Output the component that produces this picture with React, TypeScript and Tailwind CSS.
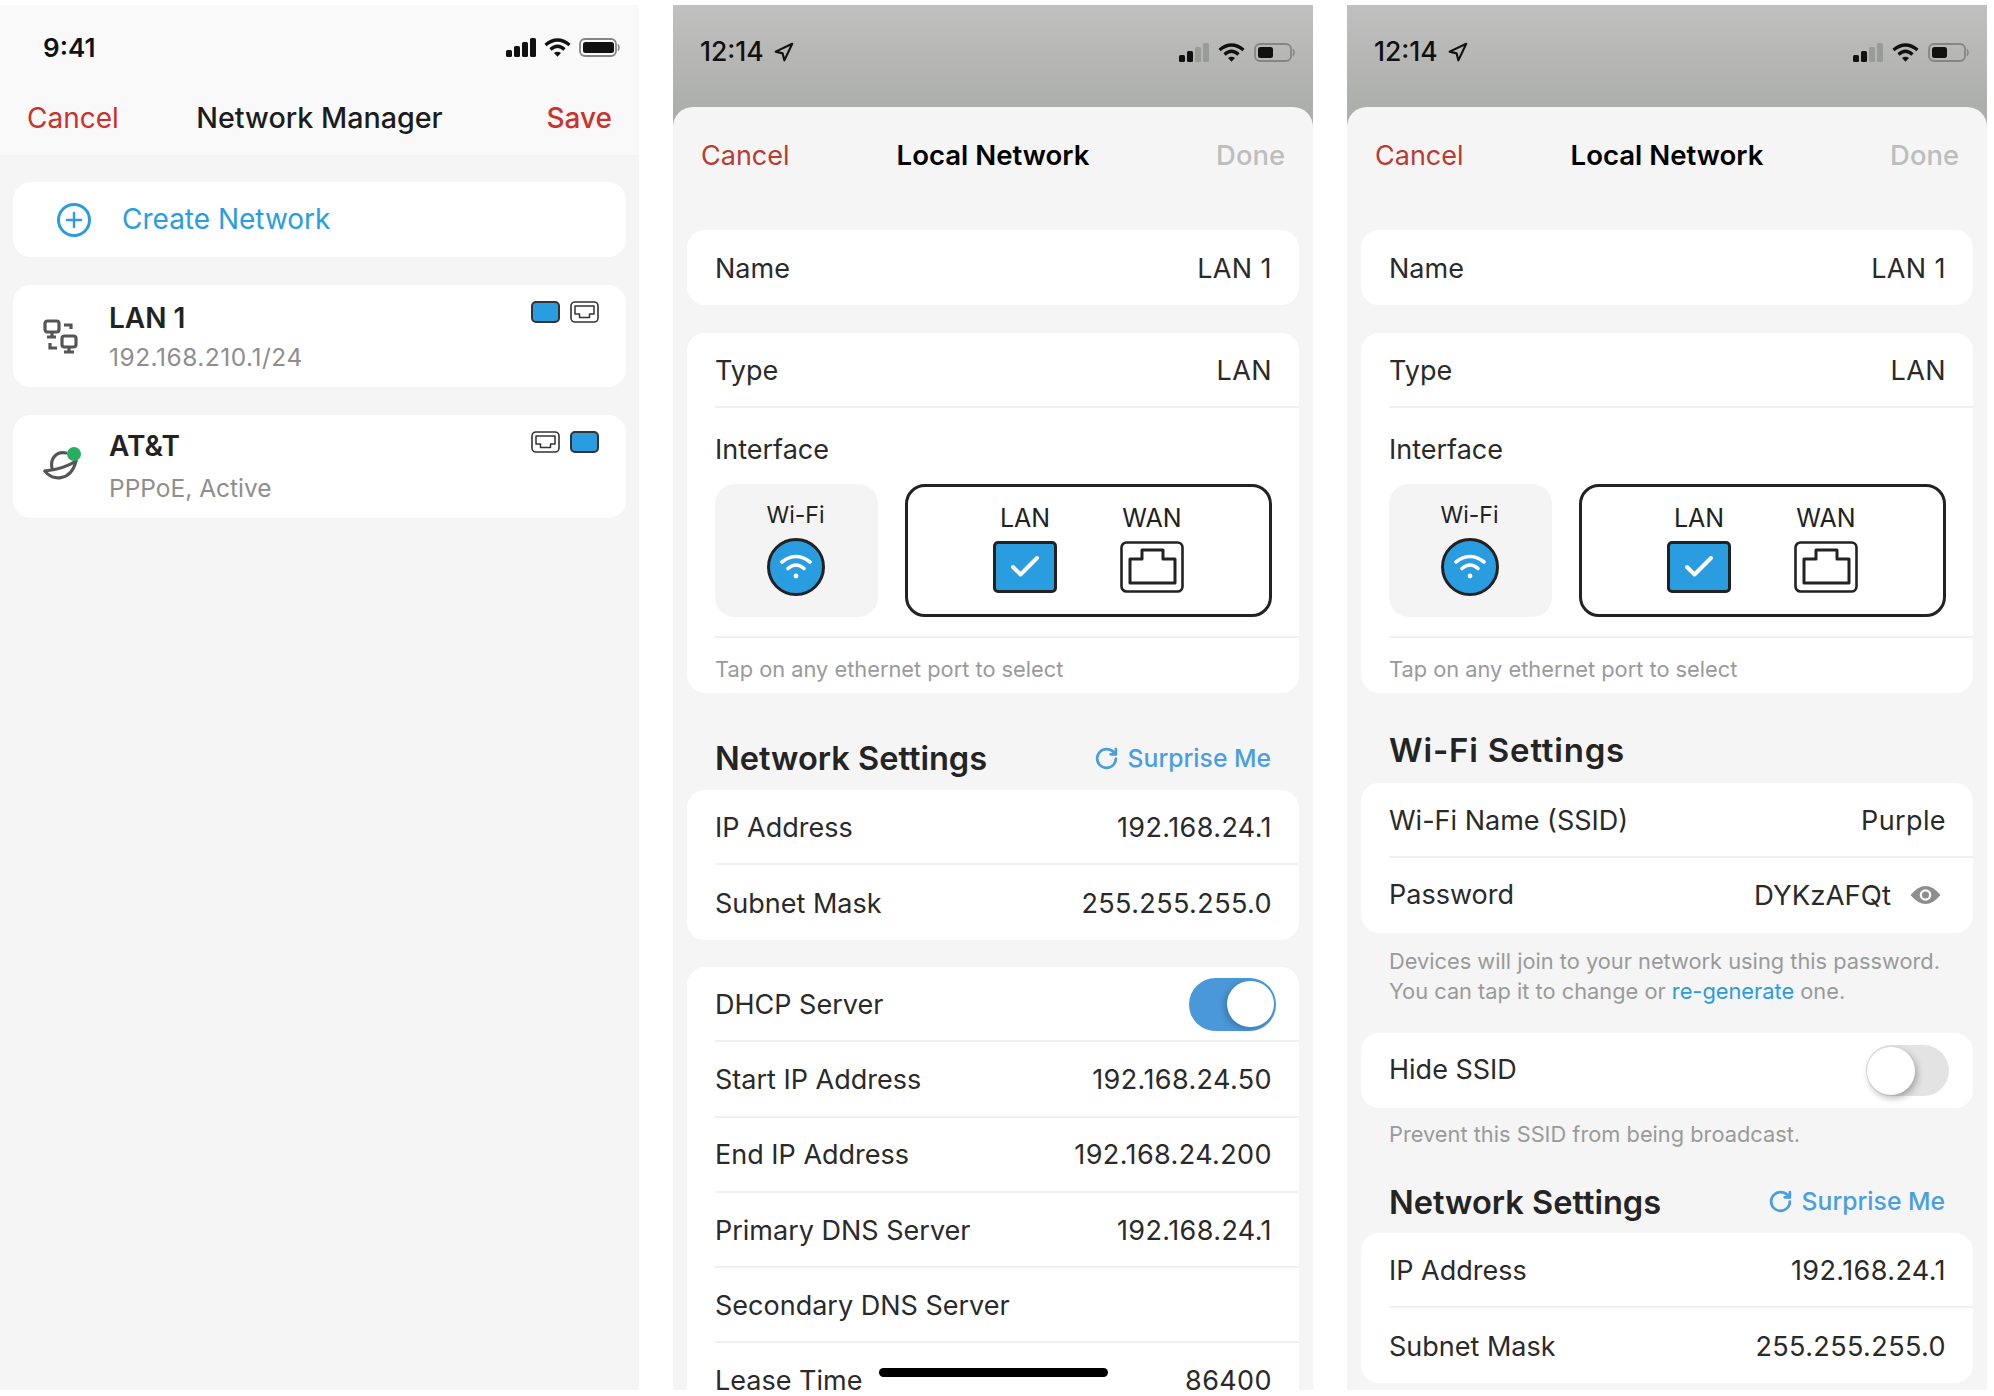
import React from "react";
import { RotateCw, Navigation, Plus, Check } from "lucide-react";

const Signal = ({ level = 4 }: { level?: number }) => (
  <svg width="30" height="19" viewBox="0 0 30 19">
    {[0, 1, 2, 3].map((i) => (
      <rect key={i} x={i * 8} y={12 - i * 4} width="6" height={7 + i * 4} rx="1.5" fill={i < level ? "#111" : "#999b97"} />
    ))}
  </svg>
);

const WifiBars = () => (
  <svg width="27" height="19" viewBox="0 0 27 19">
    <path d="M1.5 7 Q13.5 -3 25.5 7" fill="none" stroke="#111" strokeWidth="3.2" />
    <path d="M6.5 11.5 Q13.5 5 20.5 11.5" fill="none" stroke="#111" strokeWidth="3.2" />
    <path d="M10 15 Q13.5 12.5 17 15 L13.5 18.8 Z" fill="#111" />
  </svg>
);

const Battery = ({ fill }: { fill: number }) => (
  <svg width="41" height="19" viewBox="0 0 41 19">
    <rect x="1" y="1" width="36" height="17" rx="5" fill="none" stroke="#858583" strokeWidth="1.8" />
    <rect x="4" y="4" width={fill} height="11" rx="2.5" fill="#111" />
    <path d="M39 6.5 Q41 9.5 39 12.5" fill="none" stroke="#858583" strokeWidth="1.5" />
  </svg>
);

const SmallPort = () => (
  <svg width="29" height="22" viewBox="0 0 29 22">
    <rect x="1" y="1" width="27" height="20" rx="4" fill="#fff" stroke="#333" strokeWidth="1.6" />
    <path d="M5 5 H24 V13 H19.5 V16.5 H9.5 V13 H5 Z" fill="none" stroke="#333" strokeWidth="1.5" strokeLinejoin="round" />
  </svg>
);

const SmallBlue = () => <div className="w-[29px] h-[22px] rounded-[5px] bg-[#2a9ce0] border-2 border-[#333]" />;

const LanIcon = () => (
  <svg width="35" height="35" viewBox="0 0 35 35" fill="none" stroke="#555" strokeWidth="3.2">
    <rect x="2" y="2" width="14" height="11" rx="2.5" />
    <path d="M9 13 V17 M4 18 H13" />
    <path d="M21 6 H28 V10" />
    <path d="M7 24 V29 H14" />
    <rect x="19" y="17" width="14" height="11" rx="2.5" />
    <path d="M26 28 V32 M21 33 H31" />
  </svg>
);

const PlanetIcon = () => (
  <svg width="38" height="34" viewBox="0 0 38 34" fill="none" stroke="#555" strokeWidth="3.2" strokeLinecap="round" className="-mt-[6px]">
    <path d="M23 6 C13 4 7 12 9 21" />
    <path d="M2 24 C12 23 24 20 33 14" />
    <path d="M2 24 C8 34 28 35 33 14" />
    <circle cx="31" cy="7" r="7" fill="#27ae60" stroke="none" />
  </svg>
);

const Eye = () => (
  <svg width="31" height="22" viewBox="0 0 31 22">
    <path d="M0.5 11 Q15.5 -7 30.5 11 Q15.5 29 0.5 11 Z" fill="#8e8e8e" />
    <circle cx="15.5" cy="11" r="5.8" fill="#fff" />
    <circle cx="15.5" cy="11" r="3.6" fill="#8e8e8e" />
  </svg>
);

const Row = ({ label, value, last, flat, tall, children }: { label: string; value?: string; last?: boolean; flat?: boolean; tall?: boolean; children?: React.ReactNode }) => (
  <div className={`ml-[28px] pr-[27px] flex items-center justify-between text-[27px] text-[#2a2a2a] ${tall ? "h-[75.3px]" : "h-[75px]"} ${flat ? "" : "pt-[3px]"} ${last ? "" : "border-b-2 border-[#eef0f4]"}`}>
    <span>{label}</span>
    {value ? <span className="tracking-[0.4px]">{value}</span> : null}
    {children}
  </div>
);

const Card = ({ children }: { children: React.ReactNode }) => (
  <div className="bg-white rounded-[18px] overflow-hidden">{children}</div>
);

const Toggle = ({ on }: { on: boolean }) =>
  on ? (
    <div className="w-[87px] h-[53px] rounded-full bg-[#4a98d9] flex items-center justify-end pr-[2px] -mr-[4px] -mt-[2px]">
      <div className="w-[47px] h-[46px] rounded-full bg-white shadow-[-3px_2px_6px_rgba(0,0,0,0.2)]" />
    </div>
  ) : (
    <div className="w-[83px] h-[51px] rounded-full bg-[#e3e3e3] flex items-center pl-[1px] -mr-[3px]">
      <div className="w-[48px] h-[48px] rounded-full bg-white shadow-[2px_3px_7px_rgba(0,0,0,0.3)]" />
    </div>
  );

const Surprise = () => (
  <div className="flex items-center gap-[9px] text-[#4a9ee0] text-[24.7px] font-medium">
    <RotateCw size={25} strokeWidth={2.6} />
    <span>Surprise Me</span>
  </div>
);

const SectionHead = ({ title, right, cls }: { title: string; right?: boolean; cls: string }) => (
  <div className={`flex items-center justify-between pl-[28px] pr-[28px] font-semibold text-[#242424] ${cls}`}>
    <span>{title}</span>
    {right ? <Surprise /> : null}
  </div>
);

const IpCard = () => (
  <Card>
    <Row label="IP Address" value="192.168.24.1" />
    <Row label="Subnet Mask" value="255.255.255.0" last />
  </Card>
);

const Sheet = ({ children, bar }: { children: React.ReactNode; bar?: boolean }) => (
  <div className="relative w-[640px] h-[1385px] overflow-hidden bg-[#adafab]">
    <div className="h-[102px] bg-linear-to-b from-[#c0c0c0] to-[#adafab] flex justify-between pt-[36px] pl-[27px] pr-[18px]">
      <div className="flex items-center gap-[9px] h-[22px] text-[26.5px] font-medium text-[#111]">
        <span>12:14</span>
        <Navigation size={21} strokeWidth={2.4} />
      </div>
      <div className="flex items-center gap-[9px] h-[22px]">
        <Signal level={2} />
        <WifiBars />
        <Battery fill={15} />
      </div>
    </div>
    <div className="bg-[#f5f5f5] rounded-t-[20px] px-[14px] h-[1283px]">
      <div className="-mx-[14px] h-[96px] pt-[2px] px-[28px] grid grid-cols-[1fr_auto_1fr] items-center text-[27px] mb-[27px]">
        <span className="text-[#b93c33]">Cancel</span>
        <span className="font-semibold text-black text-[27.6px]">Local Network</span>
        <span className="text-[#bdbdbd] font-medium justify-self-end text-[27.4px]">Done</span>
      </div>
      <Card>
        <Row label="Name" value="LAN 1" last />
      </Card>
      <div className="h-[28px]" />
      <Card>
        <Row label="Type" value="LAN" />
        <div className="ml-[28px]">
          <div className="h-[76px] pt-[8px] flex items-center text-[27px] text-[#2a2a2a]">Interface</div>
          <div className="flex gap-[27px] pb-[19px] border-b-2 border-[#eef0f4]">
            <div className="w-[163px] h-[133px] rounded-[20px] bg-[#f4f4f4] flex flex-col items-center pt-[17px] pr-[2px]">
              <span className="text-[23px] leading-[28px] text-[#222]">Wi-Fi</span>
              <div className="mt-[9px] w-[58px] h-[58px] rounded-full bg-[#2a9ce0] border-[3px] border-[#222] flex items-center justify-center">
                <svg width="32" height="26" viewBox="0 0 32 26" fill="none" stroke="#fff" strokeWidth="3.6" strokeLinecap="round">
                  <path d="M2 8 Q16 -3 30 8" />
                  <path d="M8 14.5 Q16 7.5 24 14.5" />
                  <circle cx="16" cy="22" r="2.4" fill="#fff" stroke="none" />
                </svg>
              </div>
            </div>
            <div className="w-[367px] h-[133px] rounded-[20px] border-[3.5px] border-[#222] flex justify-center gap-[63px] pt-[16px] text-[25px] leading-[30px] text-[#222]">
              <div className="flex flex-col items-center gap-[8px]">
                <span>LAN</span>
                <div className="w-[64px] h-[52px] rounded-[5px] bg-[#2a9ce0] border-[3px] border-[#222] flex items-center justify-center text-white">
                  <Check size={36} strokeWidth={2.6} />
                </div>
              </div>
              <div className="flex flex-col items-center gap-[8px]">
                <span>WAN</span>
                <svg width="64" height="52" viewBox="0 0 64 52" fill="none" stroke="#222">
                  <rect x="1.5" y="1.5" width="61" height="49" rx="5" strokeWidth="2.6" />
                  <path d="M10 18 H22 V9 H43 V18 H55 V42 H10 Z" strokeWidth="3" strokeLinejoin="round" />
                </svg>
              </div>
            </div>
          </div>
          <div className="h-[55px] pt-[8px] flex items-center text-[21.8px] text-[#9a9a9a]">Tap on any ethernet port to select</div>
        </div>
      </Card>
      {children}
    </div>
    {bar ? <div className="absolute left-[206px] top-[1363px] w-[229px] h-[9px] rounded-full bg-black" /> : null}
  </div>
);

export default function App() {
  return (
    <div className="w-[1994px] h-[1396px] bg-white pt-[5px] flex gap-[34px] overflow-hidden font-[family-name:Inter,sans-serif]">
      <div className="w-[639px] h-[1385px] overflow-hidden bg-[#f5f5f5]">
        <div className="h-[150px] bg-[#f9f9f9]">
          <div className="h-[84px] pl-[43px] pr-[19px] flex items-center justify-between">
            <span className="text-[26px] font-semibold text-[#111]">9:41</span>
            <div className="flex items-center gap-[8px]">
              <Signal level={4} />
              <WifiBars />
              <Battery fill={31} />
            </div>
          </div>
          <div className="h-[59px] px-[27px] grid grid-cols-[1fr_auto_1fr] items-center text-[28px] -mt-[1px]">
            <span className="text-[#c9332c]">Cancel</span>
            <span className="font-medium text-[#1c1c1c] text-[28.7px]">Network Manager</span>
            <span className="text-[#c9332c] font-medium justify-self-end">Save</span>
          </div>
        </div>
        <div className="px-[13px] pt-[27px] flex flex-col gap-[28px]">
          <div className="h-[75px] bg-white rounded-[18px] flex items-center pl-[44px] gap-[31px] text-[28px] text-[#2a9ce0]">
            <div className="w-[34px] h-[34px] rounded-full border-[3px] border-[#2a9ce0] flex items-center justify-center">
              <Plus size={24} strokeWidth={2.4} />
            </div>
            <span className="-mt-[2px]">Create Network</span>
          </div>
          <div className="relative h-[102px] bg-white rounded-[18px] flex items-center pl-[30px] gap-[31px]">
            <LanIcon />
            <div className="flex flex-col pt-[5px]">
              <span className="text-[28px] leading-[37px] font-semibold text-[#222]">LAN 1</span>
              <span className="text-[24.5px] leading-[41px] text-[#8e8e8e] tracking-[0.5px]">192.168.210.1/24</span>
            </div>
            <div className="absolute right-[27px] top-[16px] flex gap-[10px]">
              <SmallBlue />
              <SmallPort />
            </div>
          </div>
          <div className="relative h-[103px] bg-white rounded-[18px] flex items-center pl-[30px] gap-[28px]">
            <PlanetIcon />
            <div className="flex flex-col pt-[6px]">
              <span className="text-[28px] leading-[37px] font-semibold text-[#222]">AT&amp;T</span>
              <span className="text-[24.5px] leading-[47px] text-[#8e8e8e]">PPPoE, Active</span>
            </div>
            <div className="absolute right-[27px] top-[16px] flex gap-[10px]">
              <SmallPort />
              <SmallBlue />
            </div>
          </div>
        </div>
      </div>

      <Sheet bar>
        <SectionHead title="Network Settings" right cls="h-[97px] pt-[34px] text-[32.6px]" />
        <IpCard />
        <div className="h-[27px]" />
        <Card>
          <Row tall label="DHCP Server">
            <Toggle on />
          </Row>
          <Row tall label="Start IP Address" value="192.168.24.50" />
          <Row tall label="End IP Address" value="192.168.24.200" />
          <Row tall label="Primary DNS Server" value="192.168.24.1" />
          <Row tall label="Secondary DNS Server" />
          <Row tall flat label="Lease Time" value="86400" last />
        </Card>
      </Sheet>

      <Sheet>
        <SectionHead title="Wi-Fi Settings" cls="h-[90px] pt-[25px] text-[33px] tracking-[0.8px]" />
        <Card>
          <Row label="Wi-Fi Name (SSID)" value="Purple" />
          <Row label="Password" last flat>
            <div className="flex items-center gap-[19px] mr-[5px]">
              <span className="text-[27.6px]">DYKzAFQt</span>
              <Eye />
            </div>
          </Row>
        </Card>
        <div className="h-[100px] pt-[13px] pl-[28px] text-[21.8px] leading-[30px] text-[#9a9a9a]">
          <div>Devices will join to your network using this password.</div>
          <div>
            You can tap it to change or <span className="text-[#2a9ce0]">re-generate</span> one.
          </div>
        </div>
        <Card>
          <Row label="Hide SSID" last flat>
            <Toggle on={false} />
          </Row>
        </Card>
        <div className="pt-[11px] pl-[28px] h-[42px] text-[21.8px] leading-[30px] text-[#9a9a9a]">Prevent this SSID from being broadcast.</div>
        <SectionHead title="Network Settings" right cls="h-[83px] pt-[21px] text-[32.6px]" />
        <IpCard />
      </Sheet>
    </div>
  );
}
